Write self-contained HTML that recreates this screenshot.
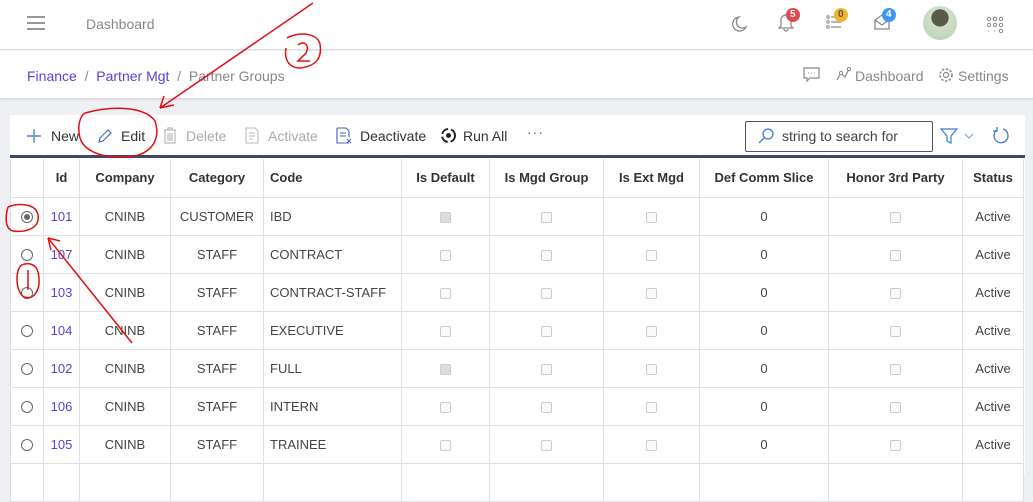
<!DOCTYPE html>
<html><head><meta charset="utf-8"><style>
*{box-sizing:border-box;margin:0;padding:0}
body{width:1033px;height:474px;overflow:hidden;background:#eef0f3;font-family:"Liberation Sans",sans-serif;position:relative;color:#333}
.top{position:absolute;left:0;top:0;width:1033px;height:50px;background:#fff;border-bottom:1px solid #dcdde2}
.bc{position:absolute;left:0;top:51px;width:1033px;height:48px;background:#fff;border-bottom:1px solid #d8d9de;box-shadow:0 1px 3px rgba(0,0,0,.08)}
.card{position:absolute;left:10px;top:115px;width:1015px;height:359px;background:#fff}
.t{position:absolute;white-space:nowrap;font-size:14px}
table{position:absolute;left:10px;top:159px;border-collapse:collapse;table-layout:fixed;width:1013px;font-size:13px;background:#fff}
td,th{border:1px solid #dde0e5;height:38px;padding:0 6px;text-align:center;color:#444;white-space:nowrap;overflow:hidden}
th{font-weight:bold;color:#333;border-top:none}
.l{text-align:left}
.id{color:#5b3fd6}
.cb{display:inline-block;width:11px;height:11px;border:1px solid #ccc;border-radius:2px;background:#fafafa;vertical-align:middle}
.cb.c{background:#ddd}
.rd{display:inline-block;width:12px;height:12px;border:1px solid #666;border-radius:50%;vertical-align:middle;position:relative}
.badge{position:absolute;height:14px;border-radius:7px;color:#fff;font-size:10px;font-weight:bold;text-align:center;line-height:14px;padding:0 4px}
</style></head><body>
<div class="top"></div>
<div class="bc"></div>
<div class="card"></div>
<svg style="position:absolute;left:27px;top:16px" width="18" height="14"><path d="M0 1h18M0 7h18M0 13h18" stroke="#777" stroke-width="1.5"/></svg>
<div class="t" style="left:86px;top:16px;color:#888">Dashboard</div>
<svg style="position:absolute;left:728px;top:14px" width="20" height="20"><path d="M11 3a7 7 0 1 0 7 10a6 6 0 0 1-7-10z" fill="none" stroke="#888" stroke-width="1.3"/></svg>
<svg style="position:absolute;left:778px;top:12px" width="16" height="20"><path d="M3 14V8a5 5 0 0 1 10 0v6l2 2H1zM6 17a2 2 0 0 0 4 0" fill="none" stroke="#888" stroke-width="1.3"/></svg>
<div class="badge" style="left:786px;top:8px;background:#e5474f">5</div>
<svg style="position:absolute;left:826px;top:14px" width="16" height="16"><path d="M5 3h10M5 8h10M5 13h10" stroke="#888" stroke-width="1.3"/><circle cx="2" cy="3" r="1.2" fill="none" stroke="#888"/><circle cx="2" cy="8" r="1.2" fill="none" stroke="#888"/><circle cx="2" cy="13" r="1.2" fill="none" stroke="#888"/></svg>
<div class="badge" style="left:834px;top:8px;background:#f0b429;color:#555">0</div>
<svg style="position:absolute;left:874px;top:14px" width="16" height="16"><path d="M1 6l7-5 7 5v9H1zM1 6l7 5 7-5" fill="none" stroke="#888" stroke-width="1.3"/></svg>
<div class="badge" style="left:882px;top:8px;background:#3b96f3">4</div>
<div style="position:absolute;left:923px;top:6px;width:34px;height:34px;border-radius:50%;background:radial-gradient(circle at 50% 35%,#5a5a4a 0 30%,#cfe0c8 32%,#b9cfb2 100%)"></div>
<svg style="position:absolute;left:986px;top:16px" width="18" height="18"><g fill="none" stroke="#888"><circle cx="3" cy="3" r="1.7"/><circle cx="9" cy="3" r="1.7"/><circle cx="15" cy="3" r="1.7"/><circle cx="3" cy="9" r="1.7"/><circle cx="9" cy="9" r="1.7"/><circle cx="15" cy="9" r="1.7"/><circle cx="15" cy="15" r="1.7"/></g><path d="M2 15h1M8 15h1" stroke="#888"/></svg>
<div class="t" style="left:27px;top:68px;color:#5b3fd6">Finance <span style="color:#888">&nbsp;/&nbsp;</span> Partner Mgt <span style="color:#888">&nbsp;/&nbsp;</span> <span style="color:#888">Partner Groups</span></div>
<svg style="position:absolute;left:803px;top:67px" width="17" height="16"><path d="M1 1h15v10H7l-3 3v-3H1z" fill="none" stroke="#888" stroke-width="1.2"/><path d="M5 6h1M8 6h1M11 6h1" stroke="#888"/></svg>
<svg style="position:absolute;left:835px;top:66px" width="16" height="16"><path d="M2 14l4-7 4 4 4-8" fill="none" stroke="#888" stroke-width="1.2"/><circle cx="14" cy="3" r="1.6" fill="#fff" stroke="#888"/><circle cx="6" cy="7" r="1.6" fill="#fff" stroke="#888"/></svg>
<div class="t" style="left:855px;top:68px;color:#888">Dashboard</div>
<svg style="position:absolute;left:938px;top:67px" width="16" height="16"><circle cx="8" cy="8" r="2.5" fill="none" stroke="#888" stroke-width="1.2"/><circle cx="8" cy="8" r="6" fill="none" stroke="#888" stroke-width="1.6" stroke-dasharray="2.4 1.6"/></svg>
<div class="t" style="left:958px;top:68px;color:#888">Settings</div>
<svg style="position:absolute;left:26px;top:128px" width="16" height="16"><path d="M8 1v14M1 8h14" stroke="#5b7fd0" stroke-width="1.4"/></svg>
<div class="t" style="left:51px;top:128px">New</div>
<svg style="position:absolute;left:97px;top:128px" width="16" height="16"><path d="M2 14l1-4 8-8 3 3-8 8z" fill="none" stroke="#4a6fc4" stroke-width="1.2"/></svg>
<div class="t" style="left:121px;top:128px">Edit</div>
<svg style="position:absolute;left:163px;top:127px" width="14" height="17"><path d="M1 3h12M5 3V1h4v2M2 3v13h10V3M5 6v8M7 6v8M9 6v8" fill="none" stroke="#bbb" stroke-width="1.2"/></svg>
<div class="t" style="left:186px;top:128px;color:#aaa">Delete</div>
<svg style="position:absolute;left:245px;top:127px" width="15" height="17"><path d="M1 1h9l3 3v12H1zM4 6h6M4 9h6M4 12h4" fill="none" stroke="#bbb" stroke-width="1.1"/></svg>
<div class="t" style="left:268px;top:128px;color:#aaa">Activate</div>
<svg style="position:absolute;left:336px;top:127px" width="17" height="17"><path d="M1 1h9l3 3v6M13 16H1V1M4 6h6M4 9h6" fill="none" stroke="#3c64b8" stroke-width="1.1"/><path d="M11 12l4 4M15 12l-4 4" stroke="#3c64b8"/></svg>
<div class="t" style="left:360px;top:128px">Deactivate</div>
<svg style="position:absolute;left:440px;top:127px" width="17" height="17"><circle cx="8.5" cy="8.5" r="6.5" fill="none" stroke="#222" stroke-width="2" stroke-dasharray="8 3"/><circle cx="8.5" cy="8.5" r="2.5" fill="#222"/></svg>
<div class="t" style="left:463px;top:128px">Run All</div>
<div class="t" style="left:527px;top:124px;color:#666;letter-spacing:1px">···</div>
<div style="position:absolute;left:745px;top:121px;width:188px;height:31px;border:1px solid #555;border-radius:2px"></div>
<svg style="position:absolute;left:757px;top:127px" width="18" height="18"><circle cx="11" cy="7" r="5" fill="none" stroke="#3c7ad6" stroke-width="1.3"/><path d="M7 11l-5 5" stroke="#3c7ad6" stroke-width="1.3"/></svg>
<div class="t" style="left:782px;top:128px;color:#444">string to search for</div>
<svg style="position:absolute;left:940px;top:127px" width="40" height="18"><path d="M1 2h16l-6 7v7l-4-2V9z" fill="none" stroke="#3c7ad6" stroke-width="1.2"/><path d="M25 7l4 4 4-4" fill="none" stroke="#8aa6d6" stroke-width="1.2"/></svg>
<svg style="position:absolute;left:991px;top:126px" width="20" height="20"><path d="M6 4a7 7 0 1 0 6-1" fill="none" stroke="#3c7ad6" stroke-width="1.3"/><path d="M6 1v4H2" fill="none" stroke="#3c7ad6" stroke-width="1.3"/></svg>
<div style="position:absolute;left:10px;top:155px;width:1015px;height:3px;background:#3a4a66"></div>
<table>
<colgroup><col style="width:33px"><col style="width:36px"><col style="width:91px"><col style="width:93px"><col style="width:138px"><col style="width:88px"><col style="width:114px"><col style="width:96px"><col style="width:129px"><col style="width:134px"><col style="width:61px"></colgroup>
<tr><th></th><th>Id</th><th>Company</th><th>Category</th><th class="l">Code</th><th>Is Default</th><th>Is Mgd Group</th><th>Is Ext Mgd</th><th>Def Comm Slice</th><th>Honor 3rd Party</th><th>Status</th></tr>
<tr><td><span class="rd"><span style="position:absolute;left:2px;top:2px;width:6px;height:6px;border-radius:50%;background:#666"></span></span></td><td class="id">101</td><td>CNINB</td><td>CUSTOMER</td><td class="l">IBD</td><td><span class="cb c"></span></td><td><span class="cb"></span></td><td><span class="cb"></span></td><td>0</td><td><span class="cb"></span></td><td>Active</td></tr>
<tr><td><span class="rd"></span></td><td class="id">107</td><td>CNINB</td><td>STAFF</td><td class="l">CONTRACT</td><td><span class="cb"></span></td><td><span class="cb"></span></td><td><span class="cb"></span></td><td>0</td><td><span class="cb"></span></td><td>Active</td></tr>
<tr><td><span class="rd"></span></td><td class="id">103</td><td>CNINB</td><td>STAFF</td><td class="l">CONTRACT-STAFF</td><td><span class="cb"></span></td><td><span class="cb"></span></td><td><span class="cb"></span></td><td>0</td><td><span class="cb"></span></td><td>Active</td></tr>
<tr><td><span class="rd"></span></td><td class="id">104</td><td>CNINB</td><td>STAFF</td><td class="l">EXECUTIVE</td><td><span class="cb"></span></td><td><span class="cb"></span></td><td><span class="cb"></span></td><td>0</td><td><span class="cb"></span></td><td>Active</td></tr>
<tr><td><span class="rd"></span></td><td class="id">102</td><td>CNINB</td><td>STAFF</td><td class="l">FULL</td><td><span class="cb c"></span></td><td><span class="cb"></span></td><td><span class="cb"></span></td><td>0</td><td><span class="cb"></span></td><td>Active</td></tr>
<tr><td><span class="rd"></span></td><td class="id">106</td><td>CNINB</td><td>STAFF</td><td class="l">INTERN</td><td><span class="cb"></span></td><td><span class="cb"></span></td><td><span class="cb"></span></td><td>0</td><td><span class="cb"></span></td><td>Active</td></tr>
<tr><td><span class="rd"></span></td><td class="id">105</td><td>CNINB</td><td>STAFF</td><td class="l">TRAINEE</td><td><span class="cb"></span></td><td><span class="cb"></span></td><td><span class="cb"></span></td><td>0</td><td><span class="cb"></span></td><td>Active</td></tr>
<tr><td></td><td></td><td></td><td></td><td></td><td></td><td></td><td></td><td></td><td></td><td></td></tr>
</table>
<svg style="position:absolute;left:0;top:0" width="1033" height="474"><g fill="none" stroke="#e01010" stroke-width="1.5">
<path d="M313 3L160 108"/><path d="M160 108l14-3M160 108l4-12"/>
<path d="M85 113c30-8 60-6 70 8c5 15 0 30-20 35c-25 4-50-2-55-18c-3-12 0-22 5-25"/>
<path d="M287 38c10-6 30-6 33 6c2 12-2 22-20 24c-12 0-16-10-14-20"/><path d="M298 45c6-5 12 0 8 8l-8 8h12"/>
<path d="M132 343L48 238"/><path d="M48 238l3 12M48 238l12 3"/>
<path d="M8 207c10-4 28-4 30 8c2 12-10 18-25 16c-8-2-8-14-5-24"/>
<path d="M22 265c-6 2-8 25 2 32c10 4 18-8 14-25c-2-8-10-10-16-7"/><path d="M28 270v20"/>
</g></svg>
</body></html>
